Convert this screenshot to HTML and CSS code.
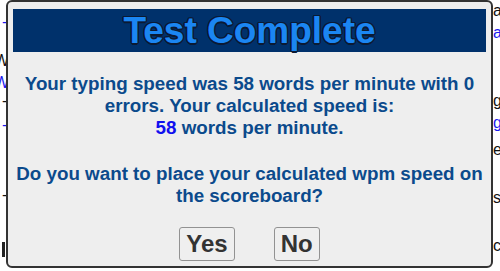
FILE: index.html
```html
<!DOCTYPE html>
<html>
<head>
<meta charset="utf-8">
<link rel="stylesheet" href="styles.css">
</head>
<body>
<div class="page">
  <div class="col col-left">
    <span class="frag link r1">-</span>
    <span class="frag r2">W</span>
    <span class="frag link r3">W</span>
    <span class="frag r4">-</span>
    <span class="frag link r5">-</span>
    <span class="frag r6">-</span>
    <span class="bar"></span>
  </div>
  <div class="col col-right">
    <span class="frag q1">a</span>
    <span class="frag link q2">a</span>
    <span class="frag q3">g</span>
    <span class="frag link q4">g</span>
    <span class="frag q5">e</span>
    <span class="frag q6">s</span>
    <span class="frag q7">c</span>
  </div>
</div>

<div class="dialog">
  <div class="title">Test Complete</div>
  <p class="msg">Your typing speed was 58 words per minute with 0 errors. Your calculated speed is:<br><span class="num">58</span> words per minute.</p>
  <p class="msg ask">Do you want to place your calculated wpm speed on the scoreboard?</p>
  <div class="buttons">
    <button class="btn">Yes</button>
    <button class="btn">No</button>
  </div>
</div>
</body>
</html>
```

FILE: styles.css
```css
html, body {
  margin: 0;
  padding: 0;
  background: #ffffff;
  font-family: "Liberation Sans", Arial, sans-serif;
  overflow: hidden;
}

.page {
  width: 500px;
  height: 271px;
  display: flex;
  justify-content: space-between;
}

.col {
  display: flex;
  flex-direction: column;
  font-size: 16px;
  line-height: 18px;
  color: #111;
}

.col-left {
  width: 6px;
  overflow: hidden;
}

.col-right {
  width: 7px;
  overflow: hidden;
  align-items: flex-start;
}

.frag { display: block; }
.link { color: #1a1aee; }

.col-left .frag { margin-left: 2px; }
.r1 { margin-top: 13px; }
.r2 { margin-top: 21px; margin-left: -6px !important; }
.r3 { margin-top: 4px; margin-left: -6px !important; }
.r4 { margin-top: 0; }
.r5 { margin-top: 6px; }
.r6 { margin-top: 52px; }
.bar {
  display: block;
  width: 3px;
  height: 15px;
  margin-top: 38px;
  margin-left: 2px;
  background: #222;
}

.q1 { margin-top: 2px; }
.q2 { margin-top: 4px; }
.q3 { margin-top: 50px; }
.q4 { margin-top: 4px; text-decoration: underline; }
.q5 { margin-top: 9px; }
.q6 { margin-top: 30px; }
.q7 { margin-top: 30px; }

.dialog {
  position: absolute;
  left: 6px;
  top: 0;
  width: 487px;
  height: 268px;
  box-sizing: border-box;
  border: 2px solid #333;
  border-radius: 6px;
  background: #eeeeee;
  padding: 7px 5px 5px 5px;
  display: flex;
  flex-direction: column;
}

.title {
  height: 43px;
  line-height: 43px;
  background: #00316b;
  color: #1b86f2;
  font-size: 37px;
  font-weight: bold;
  text-align: center;
  text-shadow:
    -1px -1px 0 #0b1a33, 1px -1px 0 #0b1a33,
    -1px 1px 0 #0b1a33, 1px 1px 0 #0b1a33,
    0 -1.5px 0 #0b1a33, 0 1.5px 0 #0b1a33,
    -1.5px 0 0 #0b1a33, 1.5px 0 0 #0b1a33;
}

.msg {
  margin: 21px 0 0 0;
  font-size: 18.8px;
  line-height: 22px;
  font-weight: bold;
  color: #0b4a8c;
  text-align: center;
}

.ask { margin-top: 24px; }

.num { color: #1010ee; }

.buttons {
  margin-top: 20px;
  display: flex;
  justify-content: center;
  gap: 39px;
}

.btn {
  height: 34px;
  padding: 0 6px;
  font-family: "Liberation Sans", Arial, sans-serif;
  font-size: 24px;
  font-weight: bold;
  color: #333;
  background: #efefef;
  border: 1px solid #929292;
  border-radius: 3px;
  line-height: 32px;
}
```
